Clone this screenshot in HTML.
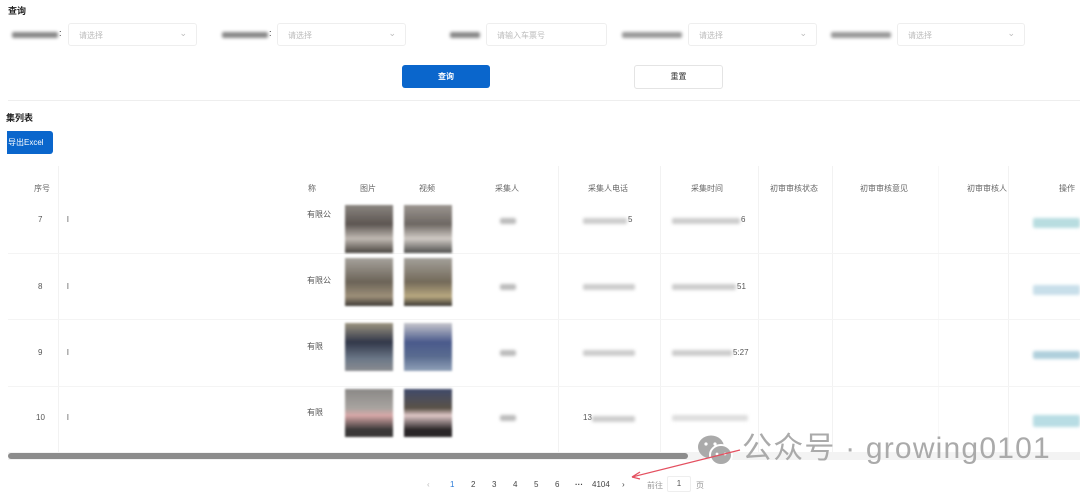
<!DOCTYPE html>
<html><head><meta charset="utf-8">
<style>
*{margin:0;padding:0;box-sizing:border-box}
body{width:1080px;height:493px;overflow:hidden;background:#fff;position:relative;font-family:"Liberation Sans","Noto Sans CJK SC",sans-serif;color:#555;font-size:8px}
.a{position:absolute}
.t{font-weight:bold;color:#222;font-size:9px}
.sel{position:absolute;height:23px;border:1px solid #eee;border-radius:3px;color:#bbb;font-size:8px;padding:6px 10px}
.sel .ch{position:absolute;right:9px;top:4px;color:#bbb;font-size:9px}
.blur{position:absolute;background:#aaa;filter:blur(1.5px);height:6px;border-radius:2px}
.h{position:absolute;top:183px;font-size:8px;color:#666;text-align:center}
.vl{position:absolute;top:166px;width:1px;height:286px;background:#f2f2f2}
.hl{position:absolute;left:8px;width:1072px;height:1px;background:#f4f4f4}
.img{position:absolute;width:48px;height:48px;filter:blur(1px)}
.pg{position:absolute;top:480px;font-size:8px;color:#444}
</style></head><body>
<div class="a t" style="left:8px;top:4px">查询</div>

<div class="blur" style="left:12px;top:32px;width:46px;background:#888"></div><div class="a" style="left:59px;top:28px;font-size:9px;color:#333">:</div>
<div class="sel" style="left:68px;top:23px;width:129px">请选择<span class="ch">⌄</span></div>
<div class="blur" style="left:222px;top:32px;width:46px;background:#888"></div><div class="a" style="left:269px;top:28px;font-size:9px;color:#333">:</div>
<div class="sel" style="left:277px;top:23px;width:129px">请选择<span class="ch">⌄</span></div>
<div class="blur" style="left:450px;top:32px;width:30px;background:#888"></div>
<div class="sel" style="left:486px;top:23px;width:121px">请输入车票号</div>
<div class="blur" style="left:622px;top:32px;width:60px;background:#999"></div>
<div class="sel" style="left:688px;top:23px;width:129px">请选择<span class="ch">⌄</span></div>
<div class="blur" style="left:831px;top:32px;width:60px;background:#999"></div>
<div class="sel" style="left:897px;top:23px;width:128px">请选择<span class="ch">⌄</span></div>

<div class="a" style="left:402px;top:65px;width:88px;height:23px;background:#0a66cc;border-radius:3px;color:#fff;font-size:8px;font-weight:bold;text-align:center;line-height:23px">查询</div>
<div class="a" style="left:634px;top:65px;width:89px;height:24px;border:1px solid #e4e4e4;border-radius:3px;color:#333;font-size:8px;text-align:center;line-height:22px">重置</div>
<div class="a" style="left:8px;top:100px;width:1072px;height:1px;background:#eee"></div>

<div class="a t" style="left:6px;top:111px">集列表</div>
<div class="a" style="left:7px;top:131px;width:46px;height:23px;background:#0a66cc;border-radius:0 3px 3px 0;color:#fff;font-size:8px;line-height:23px;padding-left:1px">导出Excel</div>

<div class="vl" style="left:58px"></div>
<div class="vl" style="left:558px"></div>
<div class="vl" style="left:660px"></div>
<div class="vl" style="left:758px"></div>
<div class="vl" style="left:832px"></div>
<div class="vl" style="left:938px;background:#f8f8f8"></div>
<div class="vl" style="left:1008px"></div>
<div class="hl" style="top:253px"></div>
<div class="hl" style="top:319px"></div>
<div class="hl" style="top:386px"></div>

<div class="h" style="left:34px">序号</div>
<div class="h" style="left:308px">称</div>
<div class="h" style="left:360px">图片</div>
<div class="h" style="left:419px">视频</div>
<div class="h" style="left:495px">采集人</div>
<div class="h" style="left:588px">采集人电话</div>
<div class="h" style="left:691px">采集时间</div>
<div class="h" style="left:770px">初审审核状态</div>
<div class="h" style="left:860px">初审审核意见</div>
<div class="h" style="left:967px">初审审核人</div>
<div class="h" style="left:1059px">操作</div>

<div class="a" style="left:38px;top:215px">7</div><div class="a" style="left:67px;top:215px">l</div>
<div class="a" style="left:38px;top:282px">8</div><div class="a" style="left:67px;top:282px">l</div>
<div class="a" style="left:38px;top:348px">9</div><div class="a" style="left:67px;top:348px">l</div>
<div class="a" style="left:36px;top:413px">10</div><div class="a" style="left:67px;top:413px">l</div>

<div class="a" style="left:307px;top:209px">有限公</div>
<div class="a" style="left:307px;top:275px">有限公</div>
<div class="a" style="left:307px;top:341px">有限</div>
<div class="a" style="left:307px;top:407px">有限</div>

<div class="img" style="left:345px;top:205px;background:linear-gradient(180deg,#8a8580 0,#5d5652 40%,#c0b9b2 70%,#4a4540)"></div>
<div class="img" style="left:404px;top:205px;background:linear-gradient(180deg,#9b9590 0,#6e6863 40%,#d0cac5 70%,#50504e)"></div>
<div class="img" style="left:345px;top:258px;background:linear-gradient(180deg,#a6a29c 0,#6c6458 50%,#9d8f79 80%,#3e3a35)"></div>
<div class="img" style="left:404px;top:258px;background:linear-gradient(180deg,#a4a09a 0,#746a5a 50%,#b8a880 80%,#3a3733)"></div>
<div class="img" style="left:345px;top:323px;background:linear-gradient(180deg,#9c9480 0,#32384a 40%,#6c7888 75%,#8a8c90)"></div>
<div class="img" style="left:404px;top:323px;background:linear-gradient(180deg,#c6c6cc 0,#4a5a8c 40%,#5a6c90 70%,#90a0b8)"></div>
<div class="img" style="left:345px;top:389px;background:linear-gradient(180deg,#8a8886 0,#a8a4a0 40%,#d8a8a8 55%,#3a3838 85%)"></div>
<div class="img" style="left:404px;top:389px;background:linear-gradient(180deg,#404a6a 0,#5a5248 40%,#e0c8c8 55%,#2a2628 85%)"></div>

<div class="blur" style="left:500px;top:218px;width:16px;background:#bbb"></div>
<div class="blur" style="left:500px;top:284px;width:16px;background:#bbb"></div>
<div class="blur" style="left:500px;top:350px;width:16px;background:#bbb"></div>
<div class="blur" style="left:500px;top:415px;width:16px;background:#bbb"></div>

<div class="blur" style="left:583px;top:218px;width:44px;background:#ccc"></div><div class="a" style="left:628px;top:215px">5</div>
<div class="blur" style="left:583px;top:284px;width:52px;background:#ccc"></div>
<div class="blur" style="left:583px;top:350px;width:52px;background:#ccc"></div>
<div class="a" style="left:583px;top:413px">13</div><div class="blur" style="left:592px;top:416px;width:43px;background:#ccc"></div>

<div class="blur" style="left:672px;top:218px;width:68px;background:#ccc"></div><div class="a" style="left:741px;top:215px">6</div>
<div class="blur" style="left:672px;top:284px;width:64px;background:#ccc"></div><div class="a" style="left:737px;top:282px">51</div>
<div class="blur" style="left:672px;top:350px;width:60px;background:#ccc"></div><div class="a" style="left:733px;top:348px">5:27</div>
<div class="blur" style="left:672px;top:415px;width:76px;background:#ddd"></div>

<div class="blur" style="left:1033px;top:218px;width:47px;height:10px;background:#b8dde0"></div>
<div class="blur" style="left:1033px;top:285px;width:47px;height:10px;background:#c8dfea"></div>
<div class="blur" style="left:1033px;top:351px;width:47px;height:8px;background:#b0d0dc"></div>
<div class="blur" style="left:1033px;top:415px;width:47px;height:12px;background:#b8dde4"></div>

<div class="a" style="left:8px;top:452px;width:1072px;height:8px;background:#f3f3f3"></div>
<div class="a" style="left:8px;top:453px;width:680px;height:6px;background:#8c8c8c;border-radius:3px"></div>

<svg class="a" style="left:695px;top:432px" width="44" height="36" viewBox="0 0 44 36">
<ellipse cx="16" cy="15" rx="13" ry="11.5" fill="#aaa"/>
<ellipse cx="26" cy="23" rx="11" ry="10" fill="#aaa" stroke="#fff" stroke-width="2"/>
<circle cx="11" cy="12" r="1.6" fill="#fff"/><circle cx="20" cy="12" r="1.6" fill="#fff"/>
<circle cx="22" cy="22" r="1.4" fill="#fff"/><circle cx="30" cy="22" r="1.4" fill="#fff"/>
</svg>
<div class="a" style="left:742px;top:431px;font-size:30px;letter-spacing:1.2px;color:#aaa;white-space:nowrap;line-height:36px">公众号 · growing0101</div>

<svg class="a" style="left:620px;top:440px" width="130" height="45"><line x1="120" y1="10" x2="12" y2="37" stroke="#e45060" stroke-width="1.3"/><path d="M12 37 L20 32 M12 37 L20 39" stroke="#e45060" stroke-width="1.3" fill="none"/></svg>

<div class="pg" style="left:427px;color:#bbb">‹</div>
<div class="pg" style="left:450px;color:#2a7ad8">1</div>
<div class="pg" style="left:471px">2</div>
<div class="pg" style="left:492px">3</div>
<div class="pg" style="left:513px">4</div>
<div class="pg" style="left:534px">5</div>
<div class="pg" style="left:555px">6</div>
<div class="pg" style="left:575px;font-weight:bold">···</div>
<div class="pg" style="left:592px">4104</div>
<div class="pg" style="left:622px">›</div>
<div class="pg" style="left:647px;color:#999">前往</div>
<div class="a" style="left:667px;top:476px;width:24px;height:16px;border:1px solid #eee;border-radius:2px;text-align:center;font-size:8px;line-height:14px">1</div>
<div class="pg" style="left:696px;color:#999">页</div>
</body></html>
